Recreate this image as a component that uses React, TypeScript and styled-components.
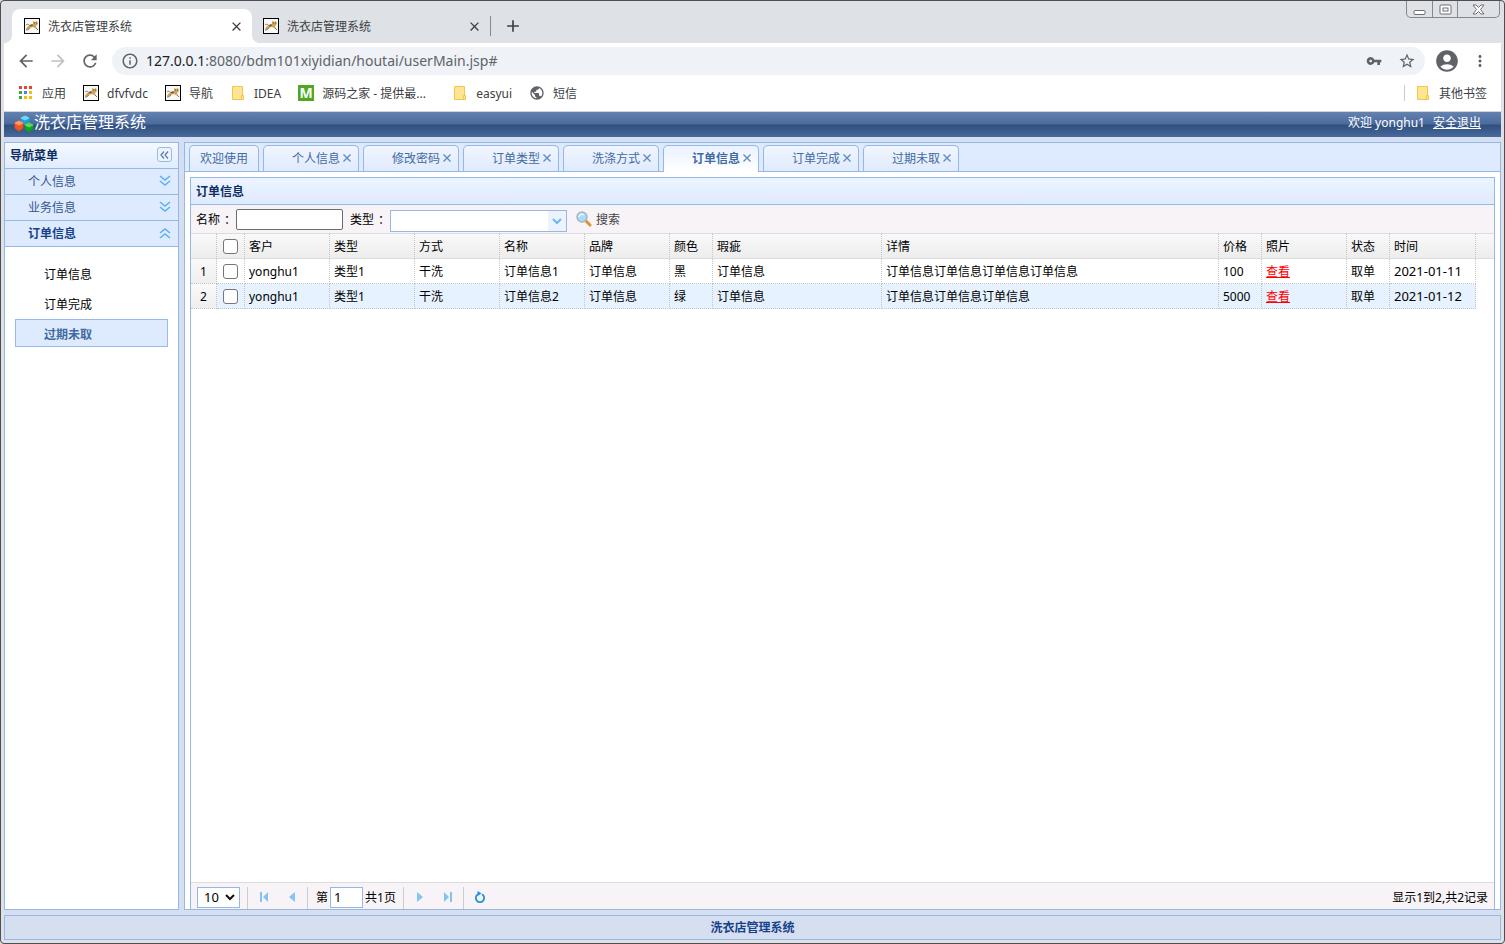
import React from "react";
import styled, { createGlobalStyle, css } from "styled-components";
import {
  MdAccountCircle,
  MdAdd,
  MdArrowBack,
  MdArrowForward,
  MdClose,
  MdInfoOutline,
  MdMoreVert,
  MdPublic,
  MdRefresh,
  MdStarBorder,
  MdVpnKey,
} from "react-icons/md";

const line = "#95b8e7";
const chrome = "#dee1e6";
const glyph = "#5f6368";

const GlobalStyle = createGlobalStyle`
  *, *::before, *::after { box-sizing: border-box; }
  body { margin: 0; background: ${chrome}; }
  body, button, input, select {
    font-family: "Noto Sans", "Noto Sans CJK SC", sans-serif;
    font-size: 12px;
  }
  button { margin: 0; padding: 0; border: 0; background: none; color: inherit; }
  ul { margin: 0; padding: 0; list-style: none; }
  svg { display: block; flex: none; }
`;

/* ---------- browser window ---------- */

const Window = styled.div`
  display: flex;
  flex-direction: column;
  min-height: 100vh;
  padding: 0 3px 3px;
  border: 1px solid #4d4d52;
  border-radius: 4px;
  background: ${chrome};
`;

const TabStrip = styled.div`
  display: flex;
  height: 42px;
  padding: 0 1px 0 8px;
  color: #3c4043;
`;

const BrowserTab = styled.div<{ $active?: boolean }>`
  position: relative;
  display: flex;
  align-items: center;
  gap: 8px;
  width: ${(p) => (p.$active ? 240 : 238)}px;
  margin-top: 8px;
  padding: 0 8px 0 ${(p) => (p.$active ? 12 : 11)}px;
  border-radius: 8px 8px 0 0;
  ${(p) =>
    p.$active &&
    css`
      background: #fff;
      &::before,
      &::after {
        content: "";
        position: absolute;
        bottom: 0;
        width: 8px;
        height: 8px;
      }
      &::before {
        left: -8px;
        background: radial-gradient(circle at 0 0, transparent 8px, #fff 8px);
      }
      &::after {
        right: -8px;
        background: radial-gradient(circle at 100% 0, transparent 8px, #fff 8px);
      }
    `}
`;

const BrowserTabTitle = styled.span`
  flex: 1;
`;

const TabDivider = styled.span`
  align-self: center;
  width: 1px;
  height: 20px;
  margin-top: 8px;
  background: #85888c;
`;

const NewTab = styled.button`
  margin: 8px 0 0 12px;
`;

const Caption = styled.div`
  display: flex;
  align-self: flex-start;
  height: 17px;
  margin-left: auto;
  border: 1px solid #85888c;
  border-top: 0;
  border-radius: 0 0 5px 5px;
`;

const CaptionButton = styled.button<{ $wide?: boolean }>`
  display: flex;
  align-items: center;
  justify-content: center;
  width: ${(p) => (p.$wide ? 42 : 25)}px;
  & + & {
    border-left: 1px solid #85888c;
  }
`;

const AddressRow = styled.div`
  display: flex;
  align-items: center;
  height: 36px;
  padding: 0 12px;
  background: #fff;
  color: ${glyph};
`;

const IconButton = styled.button<{ $gap?: number; $faded?: boolean }>`
  margin-right: ${(p) => p.$gap ?? 0}px;
  ${(p) => p.$faded && "color: #bdc1c6;"}
`;

const Omnibox = styled.div`
  display: flex;
  flex: 1;
  align-items: center;
  height: 28px;
  margin-right: 9px;
  padding: 0 9px;
  border-radius: 14px;
  background: #eff2f7;
`;

const Url = styled.span`
  flex: 1;
  margin-left: 7px;
  font-size: 14px;
  line-height: 20px;
  b {
    color: #202124;
    font-weight: 400;
  }
`;

const BookmarkBar = styled.nav`
  display: flex;
  align-items: center;
  gap: 17px;
  height: 33px;
  padding: 0 14px 4px;
  border-bottom: 1px solid #d0d3d8;
  background: #fff;
`;

const Bookmark = styled.a<{ $last?: boolean }>`
  display: flex;
  align-items: center;
  gap: 8px;
  color: #3c4043;
  text-decoration: none;
  white-space: nowrap;
  ${(p) =>
    p.$last &&
    css`
      height: 16px;
      margin-left: auto;
      padding-left: 10px;
      border-left: 1px solid #c8cacd;
    `}
`;

const BookmarkText = styled.span<{ $clip?: boolean }>`
  ${(p) => p.$clip && "width: 113px; overflow: hidden; text-overflow: ellipsis;"}
`;

/* ---------- application shell ---------- */

const Page = styled.div`
  display: flex;
  flex: 1;
  flex-direction: column;
  background: #d5dff0;
`;

const Banner = styled.header`
  display: flex;
  align-items: center;
  justify-content: space-between;
  height: 25px;
  padding: 0 20px 5px 10px;
  background: linear-gradient(#6482af, #4b6b9f 48%, #2f507d 52%, #47699c);
  color: #fff;
`;

const Brand = styled.h1`
  display: flex;
  align-items: center;
  margin: 0;
  font-size: 16px;
  font-weight: 400;
  line-height: 20px;
  svg {
    margin-top: 4px;
  }
`;

const Account = styled.div`
  display: flex;
  gap: 8px;
  a {
    color: #fff;
  }
`;

const Workspace = styled.div`
  display: flex;
  flex: 1;
  gap: 5px;
  padding: 5px 0;
`;

const Sidebar = styled.aside`
  width: 175px;
  border: 1px solid ${line};
  background: #fff;
`;

const SidebarTitle = styled.h2`
  display: flex;
  align-items: center;
  justify-content: space-between;
  height: 26px;
  margin: 0;
  padding: 0 6px 2px 5px;
  border-bottom: 1px solid ${line};
  background: linear-gradient(#f4f9ff, #e0ecff);
  color: #0e2d5f;
  font-size: 12px;
`;

const CollapseButton = styled.button`
  display: flex;
  align-items: center;
  justify-content: center;
  width: 15px;
  height: 15px;
  border: 1px solid #9cb9df;
  border-radius: 3px;
  background: #eef4fd;
  color: #5b7fae;
`;

const AccordionHeader = styled.button<{ $open?: boolean }>`
  display: flex;
  align-items: center;
  justify-content: space-between;
  width: 100%;
  height: 26px;
  padding: 0 7px 1px 23px;
  border-bottom: 1px solid ${line};
  background: #deeafd;
  color: ${(p) => (p.$open ? "#15428b" : "#33568f")};
  font-weight: ${(p) => (p.$open ? 700 : 400)};
`;

const Menu = styled.ul`
  display: grid;
  gap: 2px;
  padding: 12px 10px;
`;

const MenuLink = styled.a<{ $selected?: boolean }>`
  display: block;
  height: 28px;
  padding: 1px 0 0 28px;
  border: 1px solid ${(p) => (p.$selected ? "#99bbe8" : "transparent")};
  background: ${(p) => (p.$selected ? "#deeafd" : "transparent")};
  color: ${(p) => (p.$selected ? "#416aa3" : "#000")};
  font-weight: ${(p) => (p.$selected ? 700 : 400)};
  line-height: 28px;
  text-decoration: none;
`;

const Main = styled.main`
  display: flex;
  flex: 1;
  flex-direction: column;
  min-width: 0;
  border: 1px solid ${line};
  background: #fff;
`;

const Tabs = styled.div`
  display: flex;
  align-items: flex-end;
  gap: 4px;
  height: 29px;
  padding: 0 4px;
  border-bottom: 1px solid ${line};
  background: #deeafd;
`;

const Tab = styled.div<{ $active?: boolean; $plain?: boolean }>`
  display: flex;
  align-items: center;
  justify-content: ${(p) => (p.$plain ? "center" : "flex-end")};
  gap: 2px;
  width: ${(p) => (p.$plain ? 70 : 96)}px;
  height: ${(p) => (p.$active ? 27 : 26)}px;
  margin-bottom: ${(p) => (p.$active ? -1 : 0)}px;
  padding: 0 ${(p) => (p.$plain ? 0 : 6)}px ${(p) => (p.$active ? 2 : 1)}px 0;
  border: 1px solid ${line};
  border-bottom: 0;
  border-radius: 5px 5px 0 0;
  background: ${(p) =>
    p.$active ? "linear-gradient(#eaf2ff, #fff)" : "linear-gradient(#f1f6ff, #dfeafd)"};
  color: #416aa3;
  button[role="tab"] {
    font-weight: ${(p) => (p.$active ? 700 : 400)};
  }
`;

const Panel = styled.section`
  display: flex;
  flex: 1;
  flex-direction: column;
  margin: 5px 5px 0;
  border: 1px solid ${line};
  border-bottom: 0;
`;

const PanelTitle = styled.h2`
  height: 27px;
  margin: 0;
  padding-left: 5px;
  border-bottom: 1px solid ${line};
  background: linear-gradient(#f0f2ff, #e4f1ff 40%, #e5edff 65%, #dcecff);
  color: #0e2d5f;
  font-size: 12px;
  line-height: 27px;
`;

const SearchBar = styled.form`
  display: flex;
  align-items: center;
  height: 28px;
  padding-left: 5px;
  background: #f7f3f7;
`;

const FieldLabel = styled.label`
  margin-right: 4px;
`;

const Colon = styled.span`
  display: inline-block;
  width: 12px;
  padding-left: 4px;
  white-space: nowrap;
`;

const NameInput = styled.input`
  width: 107px;
  height: 21px;
  margin-right: 7px;
  padding: 0 2px;
  border: 1px solid #6b6b6b;
  border-radius: 2px;
`;

const SelectBox = styled.span<{ $combo?: boolean }>`
  position: relative;
  display: flex;
  width: ${(p) => (p.$combo ? 177 : 43)}px;
  height: ${(p) => (p.$combo ? 22 : 21)}px;
  margin-top: ${(p) => (p.$combo ? 4 : 0)}px;
  select {
    flex: 1;
    width: 100%;
    padding: 0 6px;
    appearance: none;
    border: 1px solid ${line};
    border-radius: 0;
    background: #fff;
    color: #000;
    font-size: 13px;
  }
`;

const SelectArrow = styled.span<{ $combo?: boolean }>`
  position: absolute;
  inset: 1px 1px 1px auto;
  display: flex;
  align-items: center;
  justify-content: center;
  width: 18px;
  background: ${(p) => (p.$combo ? "#ecf3fe" : "transparent")};
  pointer-events: none;
`;

const SearchButton = styled.button`
  display: flex;
  align-items: center;
  gap: 4px;
  margin-left: 9px;
  color: #444;
`;

/* ---------- data grid ---------- */

const GridArea = styled.div`
  flex: 1;
`;

const Grid = styled.table`
  width: 100%;
  table-layout: fixed;
  border-collapse: separate;
  border-spacing: 0;
`;

const gridCell = css`
  height: 25px;
  padding: 2px 4px 0;
  border-right: 1px dotted #c4c4c4;
  overflow: hidden;
  font-weight: 400;
  line-height: 20px;
  text-align: left;
  white-space: nowrap;
`;

const HeadCell = styled.th`
  ${gridCell}
  height: 26px;
  border-top: 1px solid #ddd;
  border-bottom: 1px solid #ddd;
  background: linear-gradient(#f9f9f9, #f3f3f4 50%, #ededed);
  &:last-child {
    border-right: 0;
  }
`;

const BodyCell = styled.td<{ $date?: boolean }>`
  ${gridCell}
  ${(p) => p.$date && "padding-top: 0; font-size: 13px;"}
  border-bottom: 1px dotted #c4c4c4;
  a {
    color: #f00;
  }
`;

const RowNumber = styled.th`
  ${gridCell}
  border-bottom: 1px dotted #c4c4c4;
  background: linear-gradient(#f9f9f9, #efefef);
  text-align: center;
`;

const Filler = styled.td``;

const Row = styled.tr<{ $striped?: boolean }>`
  ${BodyCell} {
    background: ${(p) => (p.$striped ? "#e6f2ff" : "#fff")};
  }
`;

const Check = styled.input`
  display: block;
  width: 15px;
  height: 15px;
  margin: 0 auto 2px;
  appearance: none;
  border: 1px solid #767676;
  border-radius: 3px;
  background: #fff;
  &:checked {
    background: #1a73e8;
  }
`;

const Pager = styled.div`
  display: flex;
  align-items: center;
  height: 27px;
  padding: 2px 6px 0;
  border-top: 1px solid #ddd;
  background: #f7f3f7;
`;

const PagerDivider = styled.span<{ $tight?: boolean }>`
  width: 1px;
  height: 22px;
  margin: 2px 2px 0 ${(p) => (p.$tight ? 1 : 7)}px;
  background: #ccc;
`;

const PagerButton = styled.button`
  display: flex;
  align-items: center;
  justify-content: center;
  width: 28px;
  height: 24px;
  color: #85c4f0;
`;

const PageLabel = styled.label`
  display: flex;
  align-items: center;
  gap: 2px;
  margin-left: 6px;
`;

const PageInput = styled.input`
  width: 33px;
  height: 21px;
  padding: 0 3px;
  border: 1px solid ${line};
  font-size: 13px;
`;

const PagerInfo = styled.span`
  margin-left: auto;
`;

const Footer = styled.footer`
  height: 25px;
  border: 1px solid ${line};
  color: #15428b;
  font-weight: 700;
  line-height: 24px;
  text-align: center;
`;

/* ---------- drawings ---------- */

const CatIcon = () => (
  <svg width="16" height="16" viewBox="0 0 16 16">
    <rect x=".5" y=".5" width="15" height="15" fill="#f8f8f6" stroke="#000" />
    <path d="M2 11C3 8 6 7 9 6L9 3l2 1 2-1 1 3-2 2 1 3-2-1-2-1-3 1-2 2z" fill="#cfa35a" />
    <path d="M2 7c1-1 2-1 3 0s2 0 3-1M2 12c2 0 3-1 4-2M12 10l2 2" stroke="#777" fill="none" />
    <path d="M10 5h1M12 5h1M6 8l3-1" stroke="#6e4e1c" />
  </svg>
);

const FolderIcon = () => (
  <svg width="16" height="16" viewBox="0 0 16 16">
    <path d="M2.500 1.500h10v10h1v3h-11z" fill="#ffe491" stroke="#f0c64b" />
    <path d="M11.500 14v-3.500h2V14" fill="#ffe491" stroke="#f0c64b" />
  </svg>
);

const AppsIcon = () => (
  <svg width="16" height="16" viewBox="0 0 16 16">
    {["#ea4335", "#ea4335", "#ea4335", "#34a853", "#4285f4", "#fbbc04", "#34a853", "#fbbc04", "#fbbc04"].map(
      (fill, i) => (
        <rect key={i} x={1 + (i % 3) * 5} y={1 + Math.floor(i / 3) * 5} width="3" height="3" fill={fill} />
      ),
    )}
  </svg>
);

const LetterBadge = styled.span`
  width: 16px;
  height: 16px;
  background: #4ea820;
  color: #fff;
  font-size: 14px;
  font-weight: 700;
  line-height: 16px;
  text-align: center;
`;

const CubesIcon = () => (
  <svg width="20" height="20" viewBox="0 0 20 20" strokeLinejoin="round" strokeWidth="1">
    <path d="m7 4 4-2 4 2v4l-4 3-4-3z" fill="#1c9fe0" stroke="#1c9fe0" />
    <path d="m7 4 4-2 4 2-4 2z" fill="#6fd8fb" stroke="#6fd8fb" />
    <path d="m1 9 4-2 4 2v5l-4 3-4-3z" fill="#f0561f" stroke="#e2501c" />
    <path d="m1 9 4-2 4 2-4 2z" fill="#ff9a66" stroke="#ff9a66" />
    <path d="m11 11 4-2 4 2v4l-4 3-4-3z" fill="#12a321" stroke="#0f9a1e" />
    <path d="m11 11 4-2 4 2-4 2z" fill="#5fd75a" stroke="#5fd75a" />
  </svg>
);

const DoubleChevron = ({ up }: { up?: boolean }) => (
  <svg width="12" height="12" viewBox="0 0 12 12" fill="none" stroke="#5db0ee" strokeWidth="1.500">
    <path d={up ? "M1 6l5-4 5 4M1 11l5-4 5 4" : "M1 1l5 4 5-4M1 6l5 4 5-4"} />
  </svg>
);

const ChevronDown = ({ color }: { color: string }) => (
  <svg width="12" height="10" viewBox="0 0 12 10" fill="none" stroke={color} strokeWidth="2">
    <path d="M2 3l4 4 4-4" />
  </svg>
);

const SearchIcon = () => (
  <svg width="16" height="16" viewBox="0 0 16 16">
    <path d="m10 10 4 4" stroke="#e0942f" strokeWidth="3" strokeLinecap="round" />
    <circle cx="6" cy="6" r="5" fill="#a9dbfa" stroke="#a9b4c2" strokeWidth="1.500" />
    <path d="M3 6a3 3 0 0 1 5-2" stroke="#e9f7ff" strokeWidth="1.500" fill="none" />
  </svg>
);

const CloseMark = () => (
  <svg width="10" height="10" viewBox="0 0 10 10" stroke="#5f87c0" strokeWidth="1.300">
    <path d="M1.500 1.500l7 7M8.500 1.500l-7 7" />
  </svg>
);

const PagerGlyph = ({ d }: { d: string }) => (
  <svg width="10" height="10" viewBox="0 0 10 10" fill="currentColor">
    <path d={d} />
  </svg>
);

const ReloadGlyph = () => (
  <svg width="12" height="13" viewBox="0 0 12 13">
    <path d="M4 3.200A4.200 4.200 0 1 0 8 3.200" fill="none" stroke="#2191dc" strokeWidth="1.800" />
    <path d="M3.500 0v5l4-2.500z" fill="#2191dc" />
  </svg>
);

/* ---------- content ---------- */

const tabNames = ["欢迎使用", "个人信息", "修改密码", "订单类型", "洗涤方式", "订单信息", "订单完成", "过期未取"];
const columns = ["客户", "类型", "方式", "名称", "品牌", "颜色", "瑕疵", "详情", "价格", "照片", "状态", "时间"];
const columnWidths = [26, 28, 85, 85, 85, 85, 85, 43, 169, undefined, 43, 85, 43, 86, 18];
const rows = [
  ["yonghu1", "类型1", "干洗", "订单信息1", "订单信息", "黑", "订单信息", "订单信息订单信息订单信息订单信息", "100", "查看", "取单", "2021-01-11"],
  ["yonghu1", "类型1", "干洗", "订单信息2", "订单信息", "绿", "订单信息", "订单信息订单信息订单信息", "5000", "查看", "取单", "2021-01-12"],
];

const bookmarks = [
  { icon: <AppsIcon />, text: "应用" },
  { icon: <CatIcon />, text: "dfvfvdc" },
  { icon: <CatIcon />, text: "导航" },
  { icon: <FolderIcon />, text: "IDEA" },
  { icon: <LetterBadge>M</LetterBadge>, text: "源码之家 - 提供最...", clip: true },
  { icon: <FolderIcon />, text: "easyui" },
  { icon: <MdPublic size={16} color={glyph} />, text: "短信" },
];

const BrowserChrome = () => (
  <>
    <TabStrip>
      {[true, false].map((active) => (
        <BrowserTab key={String(active)} $active={active}>
          <CatIcon />
          <BrowserTabTitle>洗衣店管理系统</BrowserTabTitle>
          <button aria-label="关闭标签页">
            <MdClose size={15} />
          </button>
        </BrowserTab>
      ))}
      <TabDivider />
      <NewTab aria-label="新标签页">
        <MdAdd size={20} />
      </NewTab>
      <Caption>
        <CaptionButton aria-label="最小化">
          <svg width="13" height="13" viewBox="0 0 13 13" fill="#fff" stroke="#6b6e73">
            <rect x="1" y="7.500" width="11" height="4" rx="1" />
          </svg>
        </CaptionButton>
        <CaptionButton aria-label="最大化">
          <svg width="13" height="11" viewBox="0 0 13 11" fill="#fff" stroke="#6b6e73">
            <rect x="1" y="1" width="11" height="9" rx="1" />
            <rect x="4" y="4" width="5" height="3" />
          </svg>
        </CaptionButton>
        <CaptionButton $wide aria-label="关闭">
          <svg width="13" height="11" viewBox="0 0 13 11" fill="#fff" stroke="#6b6e73">
            <path d="M1 1h3l2.500 2.500L9 1h3L8.500 5.500 12 10H9L6.500 7.500 4 10H1l3.500-4.500z" />
          </svg>
        </CaptionButton>
      </Caption>
    </TabStrip>
    <AddressRow>
      <IconButton $gap={12} aria-label="后退">
        <MdArrowBack size={20} />
      </IconButton>
      <IconButton $gap={12} $faded aria-label="前进">
        <MdArrowForward size={20} />
      </IconButton>
      <IconButton $gap={12} aria-label="刷新">
        <MdRefresh size={20} />
      </IconButton>
      <Omnibox>
        <MdInfoOutline size={18} />
        <Url>
          <b>127.0.0.1</b>:8080/bdm101xiyidian/houtai/userMain.jsp#
        </Url>
        <IconButton $gap={16} aria-label="密码">
          <MdVpnKey size={16} />
        </IconButton>
        <IconButton aria-label="收藏">
          <MdStarBorder size={18} />
        </IconButton>
      </Omnibox>
      <IconButton $gap={11} aria-label="用户">
        <MdAccountCircle size={26} />
      </IconButton>
      <IconButton aria-label="菜单">
        <MdMoreVert size={18} />
      </IconButton>
    </AddressRow>
    <BookmarkBar>
      {bookmarks.map((b) => (
        <Bookmark key={b.text} href="#">
          {b.icon}
          <BookmarkText $clip={b.clip}>{b.text}</BookmarkText>
        </Bookmark>
      ))}
      <Bookmark $last href="#">
        <FolderIcon />
        <BookmarkText>其他书签</BookmarkText>
      </Bookmark>
    </BookmarkBar>
  </>
);

const Navigation = () => (
  <Sidebar>
    <SidebarTitle>
      导航菜单
      <CollapseButton aria-label="收起">
        <svg width="9" height="8" viewBox="0 0 9 8" fill="none" stroke="currentColor" strokeWidth="1.300">
          <path d="M4 0.500L1 4l3 3.500M8 0.500L5 4l3 3.500" />
        </svg>
      </CollapseButton>
    </SidebarTitle>
    {["个人信息", "业务信息", "订单信息"].map((name, i) => (
      <AccordionHeader key={name} $open={i === 2} aria-expanded={i === 2}>
        {name}
        <DoubleChevron up={i === 2} />
      </AccordionHeader>
    ))}
    <Menu>
      {["订单信息", "订单完成", "过期未取"].map((name, i) => (
        <li key={name}>
          <MenuLink href="#" $selected={i === 2}>
            {name}
          </MenuLink>
        </li>
      ))}
    </Menu>
  </Sidebar>
);

const OrderGrid = () => (
  <GridArea>
    <Grid>
      <colgroup>
        {columnWidths.map((w, i) => (
          <col key={i} width={w} />
        ))}
      </colgroup>
      <thead>
        <tr>
          <HeadCell />
          <HeadCell>
            <Check type="checkbox" aria-label="全选" />
          </HeadCell>
          {columns.map((c) => (
            <HeadCell key={c}>{c}</HeadCell>
          ))}
          <HeadCell />
        </tr>
      </thead>
      <tbody>
        {rows.map((cells, r) => (
          <Row key={r} $striped={r % 2 === 1}>
            <RowNumber scope="row">{r + 1}</RowNumber>
            <BodyCell>
              <Check type="checkbox" aria-label={`选择第${r + 1}行`} />
            </BodyCell>
            {cells.map((text, c) => (
              <BodyCell key={c} $date={c === 11}>
                {c === 9 ? <a href="#">{text}</a> : text}
              </BodyCell>
            ))}
            <Filler />
          </Row>
        ))}
      </tbody>
    </Grid>
  </GridArea>
);

const Pagination = () => (
  <Pager>
    <SelectBox>
      <select aria-label="每页条数" defaultValue="10">
        <option>10</option>
        <option>20</option>
      </select>
      <SelectArrow>
        <ChevronDown color="#111" />
      </SelectArrow>
    </SelectBox>
    <PagerDivider />
    <PagerButton aria-label="首页">
      <PagerGlyph d="M1 0h2v10H1zM9 0v10L4 5z" />
    </PagerButton>
    <PagerButton aria-label="上一页">
      <PagerGlyph d="M8 0v10L2 5z" />
    </PagerButton>
    <PagerDivider $tight />
    <PageLabel>
      第
      <PageInput defaultValue="1" />
      共1页
    </PageLabel>
    <PagerDivider />
    <PagerButton aria-label="下一页">
      <PagerGlyph d="M2 0v10l6-5z" />
    </PagerButton>
    <PagerButton aria-label="末页">
      <PagerGlyph d="M1 0v10l5-5zM7 0h2v10H7z" />
    </PagerButton>
    <PagerDivider $tight />
    <PagerButton aria-label="刷新列表">
      <ReloadGlyph />
    </PagerButton>
    <PagerInfo>显示1到2,共2记录</PagerInfo>
  </Pager>
);

export default function App() {
  return (
    <Window>
      <GlobalStyle />
      <BrowserChrome />
      <Page>
        <Banner>
          <Brand>
            <CubesIcon />
            洗衣店管理系统
          </Brand>
          <Account>
            <span>欢迎 yonghu1</span>
            <a href="#">安全退出</a>
          </Account>
        </Banner>
        <Workspace>
          <Navigation />
          <Main>
            <Tabs role="tablist">
              {tabNames.map((name, i) => (
                <Tab key={name} $plain={i === 0} $active={i === 5}>
                  <button role="tab" aria-selected={i === 5}>
                    {name}
                  </button>
                  {i > 0 && (
                    <button aria-label={`关闭${name}`}>
                      <CloseMark />
                    </button>
                  )}
                </Tab>
              ))}
            </Tabs>
            <Panel>
              <PanelTitle>订单信息</PanelTitle>
              <SearchBar>
                <FieldLabel htmlFor="order-name">
                  名称<Colon>：</Colon>
                </FieldLabel>
                <NameInput id="order-name" />
                <FieldLabel htmlFor="order-type">
                  类型<Colon>：</Colon>
                </FieldLabel>
                <SelectBox $combo>
                  <select id="order-type" defaultValue="">
                    <option value=""></option>
                    <option value="1">类型1</option>
                  </select>
                  <SelectArrow $combo>
                    <ChevronDown color="#6db7ee" />
                  </SelectArrow>
                </SelectBox>
                <SearchButton type="button">
                  <SearchIcon />
                  搜索
                </SearchButton>
              </SearchBar>
              <OrderGrid />
              <Pagination />
            </Panel>
          </Main>
        </Workspace>
        <Footer>洗衣店管理系统</Footer>
      </Page>
    </Window>
  );
}
